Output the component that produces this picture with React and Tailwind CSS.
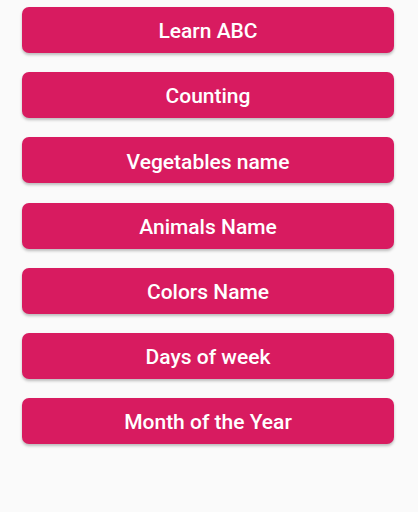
const items = [
  'Learn ABC',
  'Counting',
  'Vegetables name',
  'Animals Name',
  'Colors Name',
  'Days of week',
  'Month of the Year',
];

export default function App() {
  return (
    <div className="w-[418px] h-[512px] bg-[#fafafa] overflow-hidden" style={{ fontFamily: 'Roboto, sans-serif' }}>
      <div className="flex flex-col gap-[19.2px] pt-[7px] pl-[22px] pr-[24px]">
        {items.map(item => (
          <button
            key={item}
            className="h-[46px] w-full rounded-[7px] bg-[#d81b60] text-white text-[21px] font-medium pt-[4px] shadow-[0_2px_3px_rgba(0,0,0,0.25)] flex items-center justify-center"
          >
            {item}
          </button>
        ))}
      </div>
    </div>
  );
}
